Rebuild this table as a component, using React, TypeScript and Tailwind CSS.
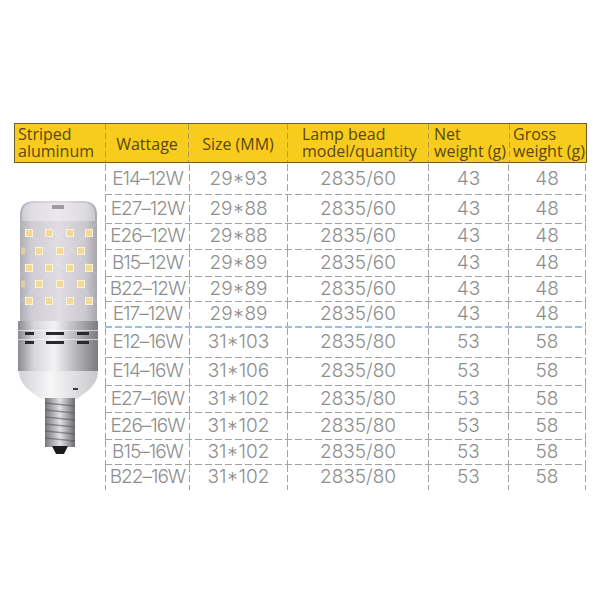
const rows = [
  { w: "E14–12W", size: "29*93", bead: "2835/60", net: "43", gross: "48", h: "h-[30px]", line: "none" },
  { w: "E27–12W", size: "29*88", bead: "2835/60", net: "43", gross: "48", h: "h-[28px]", line: "gray" },
  { w: "E26–12W", size: "29*88", bead: "2835/60", net: "43", gross: "48", h: "h-[25px]", line: "gray" },
  { w: "B15–12W", size: "29*89", bead: "2835/60", net: "43", gross: "48", h: "h-[26px]", line: "gray" },
  { w: "B22–12W", size: "29*89", bead: "2835/60", net: "43", gross: "48", h: "h-[24px]", line: "gray" },
  { w: "E17–12W", size: "29*89", bead: "2835/60", net: "43", gross: "48", h: "h-[24px]", line: "gray" },
  { w: "E12–16W", size: "31*103", bead: "2835/80", net: "53", gross: "58", h: "h-[29px]", line: "blue" },
  { w: "E14–16W", size: "31*106", bead: "2835/80", net: "53", gross: "58", h: "h-[27px]", line: "gray" },
  { w: "E27–16W", size: "31*102", bead: "2835/80", net: "53", gross: "58", h: "h-[26px]", line: "gray" },
  { w: "E26–16W", size: "31*102", bead: "2835/80", net: "53", gross: "58", h: "h-[26px]", line: "gray" },
  { w: "B15–16W", size: "31*102", bead: "2835/80", net: "53", gross: "58", h: "h-[24px]", line: "gray" },
  { w: "B22–16W", size: "31*102", bead: "2835/80", net: "53", gross: "58", h: "h-[25px]", line: "gray" },
];

const VLine = () => (
  <div className="w-px self-stretch shrink-0 bg-[image:repeating-linear-gradient(180deg,#a3a3a3_0_7px,transparent_7px_10px)]" />
);

const HeadLine = () => (
  <div className="w-px self-stretch shrink-0 bg-[image:repeating-linear-gradient(180deg,#b49a46_0_6px,transparent_6px_9px)]" />
);

const HLine = ({ kind }: { kind: string }) => {
  if (kind === "none") return <div className="h-px" />;
  if (kind === "blue")
    return <div className="h-[2px] bg-[image:repeating-linear-gradient(90deg,#93c3e2_0_7px,transparent_7px_10px)]" />;
  return <div className="h-px bg-[image:repeating-linear-gradient(90deg,#a3a3a3_0_7px,transparent_7px_10px)]" />;
};

const ledA = [15, 35, 56, 75];
const ledB = [25, 46, 67];

const Bulb = () => (
  <svg width="91" height="326" viewBox="0 0 91 326">
    <defs>
      <linearGradient id="body" x1="0" x2="1" y1="0" y2="0">
        <stop offset="0" stopColor="#aeacb4" />
        <stop offset="0.15" stopColor="#cfccd4" />
        <stop offset="0.5" stopColor="#dfdce4" />
        <stop offset="0.85" stopColor="#cbc8d0" />
        <stop offset="1" stopColor="#a9a7ae" />
      </linearGradient>
      <linearGradient id="metal" x1="0" x2="1" y1="0" y2="0">
        <stop offset="0" stopColor="#8a8a8f" />
        <stop offset="0.2" stopColor="#d6d6da" />
        <stop offset="0.45" stopColor="#f3f3f5" />
        <stop offset="0.7" stopColor="#bcbcc0" />
        <stop offset="1" stopColor="#7b7b80" />
      </linearGradient>
      <linearGradient id="neck" x1="0" x2="1" y1="0" y2="0">
        <stop offset="0" stopColor="#d2d2d6" />
        <stop offset="0.4" stopColor="#f7f7f8" />
        <stop offset="1" stopColor="#c8c8cc" />
      </linearGradient>
      <linearGradient id="screw" x1="0" x2="1" y1="0" y2="0">
        <stop offset="0" stopColor="#77777b" />
        <stop offset="0.5" stopColor="#e2e2e4" />
        <stop offset="1" stopColor="#6c6c70" />
      </linearGradient>
    </defs>
    <path d="M6 160 V52 Q6 38 20 38 H69 Q83 38 83 52 V160 Z" fill="url(#body)" />
    <path d="M8 58 V52 Q8 40 20 40 H69 Q81 40 81 52 V58 Z" fill="#ffffff" opacity="0.35" />
    <rect x="38" y="42" width="12" height="4" fill="#6a6870" opacity="0.6" />
    <path d="M6 60 L83 140 M83 60 L6 140 M30 58 L83 112 M59 58 L6 112" stroke="#ffffff" strokeWidth="1" opacity="0.25" />
    {[70, 105, 138].map((y) =>
      ledA.map((x) => (
        <rect key={`a${y}-${x}`} x={x - 3.5} y={y - 3.5} width="7" height="7" fill="#f2da96" stroke="#fbf1d6" strokeWidth="1" />
      ))
    )}
    {[88, 121].map((y) =>
      ledB.map((x) => (
        <rect key={`b${y}-${x}`} x={x - 3.5} y={y - 3.5} width="7" height="7" fill="#f2da96" stroke="#fbf1d6" strokeWidth="1" />
      ))
    )}
    {[88, 121].map((y) => (
      <rect key={`e${y}`} x="7" y={y - 3.5} width="4" height="7" fill="#e8d49a" opacity="0.8" />
    ))}
    <rect x="4" y="158" width="80" height="50" fill="url(#metal)" />
    {[169, 178].map((y) => (
      <g key={y}>
        <rect x="4" y={y - 2} width="80" height="1" fill="#ffffff" opacity="0.6" />
        <rect x="11" y={y} width="9" height="3" fill="#2a2a2e" />
        <rect x="32" y={y} width="18" height="3" fill="#2a2a2e" />
        <rect x="63" y={y} width="12" height="3" fill="#2a2a2e" />
      </g>
    ))}
    <path d="M5 208 H84 Q84 222 68 232 Q64 236 60 236 H31 Q26 236 22 232 Q5 222 5 208 Z" fill="url(#neck)" />
    <rect x="59" y="225" width="5" height="2" fill="#3a3a3e" />
    <rect x="31" y="235" width="30" height="49" fill="url(#screw)" />
    {[240, 247, 254, 261, 268, 275].map((y) => (
      <path key={y} d={`M31 ${y} L61 ${y + 3}`} stroke="#55555a" strokeWidth="1.5" opacity="0.55" />
    ))}
    <path d="M38 283 H54 L50 291 H42 Z" fill="#1c1c1e" />
  </svg>
);

export default function App() {
  return (
    <div className="w-[600px] h-[600px] bg-white pt-[123px] pl-[14px] font-['Open_Sans',sans-serif]">
      <div className="flex w-[573px] h-[40px] bg-[#f8cc1c] border border-[#6e5d24] text-[16px] leading-[17px] text-[#5a4715]">
        <div className="w-[90px] pl-[3px] pt-[2px]">
          Striped
          <br />
          aluminum
        </div>
        <HeadLine />
        <div className="w-[82px] flex items-center justify-center pt-[2px]">Wattage</div>
        <HeadLine />
        <div className="w-[98px] flex items-center justify-center pt-[2px]">Size (MM)</div>
        <HeadLine />
        <div className="w-[140px] pl-[14px] pt-[2px]">
          Lamp bead
          <br />
          model/quantity
        </div>
        <HeadLine />
        <div className="w-[80px] pl-[5px] pt-[2px] whitespace-nowrap">
          Net
          <br />
          weight (g)
        </div>
        <HeadLine />
        <div className="w-[76px] pl-[3px] pt-[2px] whitespace-nowrap">
          Gross
          <br />
          weight (g)
        </div>
      </div>
      <div className="flex">
        <div className="w-[91px] shrink-0">
          <Bulb />
        </div>
        <div className="flex flex-col w-[481px] font-['Inter',sans-serif] font-light text-[19px] text-[#8e8e8e]">
          {rows.map((r) => (
            <div key={r.w} className="flex flex-col">
              <HLine kind={r.line} />
              <div className={`flex ${r.h}`}>
                <VLine />
                <div className="w-[83px] flex items-center justify-center tracking-[-1px] whitespace-nowrap">{r.w}</div>
                <VLine />
                <div className="w-[97px] flex items-center justify-center">{r.size}</div>
                <VLine />
                <div className="w-[140px] flex items-center justify-center">{r.bead}</div>
                <VLine />
                <div className="w-[79px] flex items-center justify-center">{r.net}</div>
                <VLine />
                <div className="w-[76px] flex items-center justify-center">{r.gross}</div>
                <VLine />
              </div>
            </div>
          ))}
        </div>
      </div>
    </div>
  );
}
